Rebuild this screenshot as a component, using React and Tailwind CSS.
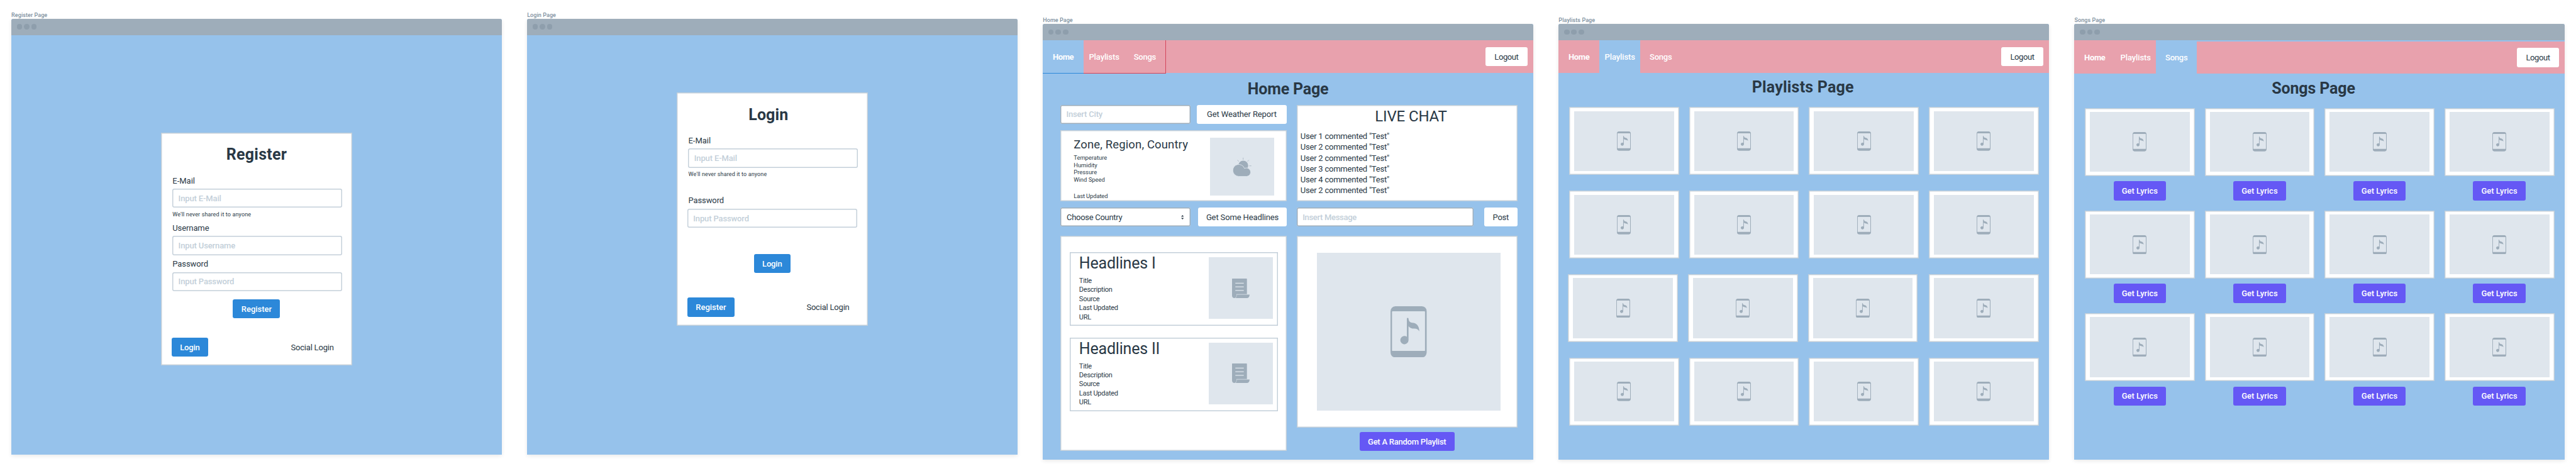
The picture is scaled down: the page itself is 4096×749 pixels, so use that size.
import React from "react";

function DeviceIcon({ className }) {
  return (
    <svg viewBox="130 14 239 337" preserveAspectRatio="none" className={className} fill="#9eadba">
      <path
        fillRule="evenodd"
        d="M162 14H337Q369 17 369 48V317Q367 349 337 351H162Q131 348 130 317V48Q132 17 162 14ZM144 47Q140 47 140 51V304Q140 308 144 308H354Q358 308 358 304V51Q358 47 354 47Z"
      />
      <path d="M238 95Q238 90 243.500 90Q249 90 249 96Q251 121 273 123Q319 126 320 179Q310 161 287 161Q262 161 249 145V238A27 27 0 1 1 238 215Z" />
    </svg>
  );
}

function CloudIcon() {
  return (
    <svg viewBox="222 52 132 130" className="mt-[2px] h-[31.300px] w-[31.800px]">
      <g stroke="#9eadba" strokeWidth="3" strokeLinecap="round">
        <path d="M295.500 57V67M259 72L265.500 79M332 72L325.500 79M338 109H348" />
      </g>
      <circle cx="296" cy="107" r="32.500" fill="#9eadba" />
      <path
        d="M266 178.500A39.500 39.500 0 1 1 304 126A28 28 0 1 1 321 178.500Z"
        fill="#9eadba"
        stroke="#dfe6ed"
        strokeWidth="3.500"
      />
    </svg>
  );
}

function ScrollIcon() {
  return (
    <svg viewBox="69 98 117 130" preserveAspectRatio="none" className="h-[31px] w-[28px]">
      <path
        d="M72 98H165Q168 98 168 101V202H98V213Q97 226 84 228Q70 227 69 212V101Q69 98 72 98Z"
        fill="#9eadba"
      />
      <path d="M100 205H186Q184 226 170 228H93Q100 222 100 212Z" fill="#9eadba" />
      <path d="M91 129H147M91 153H147M91 177H147" stroke="#dfe6ed" strokeWidth="5" />
    </svg>
  );
}

function Frame({ label, offset, children }) {
  return (
    <section className={`w-[780px] shrink-0 ${offset}`}>
      <p className="h-[12px] pl-[0.200px] text-[9px] leading-[13.400px] font-medium tracking-[0.070px] whitespace-nowrap text-[#7d8f9e]">
        {label}
      </p>
      <div className="flex h-[693px] flex-col overflow-hidden rounded-t-[3px] bg-[#96c2eb] shadow-[0_2px_6px_rgba(0,0,0,0.090)]">
        <div className="flex h-[26px] shrink-0 items-center gap-[2.900px] bg-[#9eadba] pl-[8.700px]">
          <i className="size-[8.660px] rounded-full bg-[#8e9eac]" />
          <i className="size-[8.660px] rounded-full bg-[#8e9eac]" />
          <i className="size-[8.660px] rounded-full bg-[#8e9eac]" />
        </div>
        {children}
      </div>
    </section>
  );
}

function Field({ text, className }) {
  return (
    <div
      className={`flex h-[30.200px] items-center rounded-[3px] bg-white pt-px pl-[9.300px] font-medium whitespace-nowrap text-[#c3cfd9] ${className}`}
    >
      {text}
    </div>
  );
}

const formField = "w-[270px] shadow-[inset_0_0_0_1.440px_#c3cfd9] tracking-[-0.130px]";
const homeField = "shadow-[inset_0_0_0_1.440px_#9eadba]";

function BlueButton({ text, className }) {
  return (
    <button
      className={`flex h-[30.300px] items-center justify-center rounded-[3px] bg-[#2c88d9] pt-px font-medium text-white ${className}`}
    >
      {text}
    </button>
  );
}

function PurpleButton({ text, className }) {
  return (
    <button
      className={`flex h-[30.400px] items-center justify-center rounded-[3px] bg-[#6558f5] pt-px font-medium whitespace-nowrap text-white ${className}`}
    >
      {text}
    </button>
  );
}

function WhiteButton({ text, className }) {
  return (
    <button
      className={`flex h-[30.200px] shrink-0 items-center justify-center rounded-[3px] bg-white pt-px whitespace-nowrap ${className}`}
    >
      {text}
    </button>
  );
}

function RegisterPage() {
  return (
    <Frame label="Register Page" offset="mt-[17.600px]">
      <div className="mt-[155.100px] ml-[238.100px] flex h-[370.700px] w-[304px] flex-col bg-white px-[18.300px] pt-[17.100px] shadow-[inset_0_0_0_1.440px_#c3cfd9]">
        <h1 className="h-[36px] text-center text-[25px] leading-[36.500px] font-bold tracking-[0.240px]">Register</h1>
        <label className="mt-[14.800px] h-[16px] leading-[17.200px]">E-Mail</label>
        <Field text="Input E-Mail" className={`mt-[5.400px] ${formField}`} />
        <p className="mt-[4.800px] h-[12px] text-[9px] leading-[12.500px] tracking-[0.130px]">We'll never shared it to anyone</p>
        <label className="mt-[6.600px] h-[16px] leading-[17.200px] tracking-[-0.100px]">Username</label>
        <Field text="Input Username" className={`mt-[5.900px] ${formField}`} />
        <label className="mt-[5.700px] h-[16px] leading-[17.200px] tracking-[-0.100px]">Password</label>
        <Field text="Input Password" className={`mt-[5.400px] ${formField}`} />
        <BlueButton text="Register" className="mt-[13.300px] w-[75px] self-center" />
        <div className="mt-[30.400px] -ml-[1.500px] flex items-center justify-between pr-[11px]">
          <BlueButton text="Login" className="w-[58.300px] tracking-[-0.200px]" />
          <span className="pt-px tracking-[-0.200px]">Social Login</span>
        </div>
      </div>
    </Frame>
  );
}

function LoginPage() {
  return (
    <Frame label="Login Page" offset="mt-[17.600px]">
      <div className="mt-[91.500px] ml-[237.800px] flex h-[370.700px] w-[304px] flex-col bg-white px-[18.700px] pt-[17.900px] shadow-[inset_0_0_0_1.440px_#c3cfd9]">
        <h1 className="h-[36px] pr-[12px] text-center text-[25px] leading-[36.500px] font-bold tracking-[0.100px]">Login</h1>
        <label className="mt-[14.100px] h-[16px] leading-[17.200px]">E-Mail</label>
        <Field text="Input E-Mail" className={`mt-[5.400px] ${formField}`} />
        <p className="mt-[4.800px] h-[12px] text-[9px] leading-[12.500px] tracking-[0.130px]">We'll never shared it to anyone</p>
        <label className="mt-[26.600px] h-[16px] leading-[17.200px] tracking-[-0.100px]">Password</label>
        <Field text="Input Password" className={`mt-[5.900px] -ml-[1.500px] ${formField}`} />
        <BlueButton text="Login" className="mt-[41.900px] w-[58.300px] self-center tracking-[-0.200px]" />
        <div className="mt-[39.100px] -ml-[1.500px] flex items-center justify-between pr-[10.500px]">
          <BlueButton text="Register" className="w-[75px]" />
          <span className="pt-px tracking-[-0.200px]">Social Login</span>
        </div>
      </div>
    </Frame>
  );
}

const tabs = [
  ["Home", "font-bold tracking-[-0.350px]"],
  ["Playlists", "font-medium tracking-[-0.100px]"],
  ["Songs", "font-medium tracking-[-0.240px]"],
];

function Nav({ active, tabsClass, barClass }) {
  return (
    <nav className={`flex shrink-0 ${barClass}`}>
      <div className={`flex text-white ${tabsClass}`}>
        {tabs.map(([name, cls]) => (
          <div
            key={name}
            className={`flex w-[65px] items-center justify-center pt-px ${cls} ${name === active ? "bg-[#96c2eb]" : "bg-[#e8a1ad]"}`}
          >
            {name}
          </div>
        ))}
      </div>
      <div className="flex flex-1 items-center justify-end bg-[#e8a1ad] pr-[9.400px]">
        <WhiteButton text="Logout" className="w-[66.600px] tracking-[-0.400px]" />
      </div>
    </nav>
  );
}

function HomeNav() {
  return (
    <nav className="flex h-[52px] shrink-0 bg-[#e8a1ad]">
      <div className="-mb-px flex h-[53px] text-white">
        <div className="flex w-[65px] items-center justify-center border-b border-[#2c88d9] bg-[#96c2eb] pt-px font-bold tracking-[-0.350px]">
          Home
        </div>
        <div className="flex w-[65px] items-center justify-center border-b border-[#d3455b] bg-[#e8a1ad] pt-px font-medium tracking-[-0.100px]">
          Playlists
        </div>
        <div className="flex w-[65.500px] items-center justify-center border-r border-b border-[#d3455b] bg-[#e8a1ad] pt-px font-medium tracking-[-0.240px]">
          Songs
        </div>
      </div>
      <div className="flex flex-1 items-center justify-end pr-[9.400px]">
        <WhiteButton text="Logout" className="w-[66.600px] tracking-[-0.400px]" />
      </div>
    </nav>
  );
}

const card = "bg-white shadow-[inset_0_0_0_1.440px_#c3cfd9]";

function Headline({ title, className }) {
  return (
    <article className={`flex h-[116.900px] w-[330.700px] justify-between pt-[7.900px] pr-[8px] pl-[15px] ${card} ${className}`}>
      <div className="text-[11px] leading-[14.400px] tracking-[-0.260px]">
        <h2 className="-mt-[5.700px] mb-[4.600px] h-[32px] text-[25px] leading-[32px] tracking-[-0.200px] whitespace-nowrap">{title}</h2>
        <p>Title</p>
        <p>Description</p>
        <p>Source</p>
        <p>Last Updated</p>
        <p>URL</p>
      </div>
      <div className="flex h-[98.300px] w-[101.100px] items-center justify-center bg-[#dfe6ed]">
        <ScrollIcon />
      </div>
    </article>
  );
}

const speakers = [1, 2, 2, 3, 4, 2];

function HomePage() {
  return (
    <Frame label="Home Page" offset="mt-[26px]">
      <HomeNav />
      <h1 className="mt-[7.200px] h-[36px] text-center text-[25px] leading-[37.400px] font-bold tracking-[-0.200px]">Home Page</h1>
      <div className="flex gap-[15.900px] pt-[7.400px] pl-[28.200px]">
        <div className="flex w-[359.700px] flex-col">
          <div className="flex justify-between">
            <Field text="Insert City" className={`w-[206.400px] tracking-[-0.190px] ${homeField}`} />
            <WhiteButton text="Get Weather Report" className="w-[143.100px] tracking-[-0.130px]" />
          </div>
          <div className={`mt-[10px] flex h-[113.400px] justify-between pt-[12.200px] pr-[19.600px] pl-[21px] ${card}`}>
            <div className="text-[9.400px] leading-[11.500px] whitespace-nowrap">
              <h2 className="-mt-[1.400px] mb-[3.600px] h-[24px] text-[18.500px] leading-[24px] tracking-[0.130px]">Zone, Region, Country</h2>
              <p>Temperature</p>
              <p>Humidity</p>
              <p>Pressure</p>
              <p>Wind Speed</p>
              <p className="mt-[14.400px] tracking-[-0.110px]">Last Updated</p>
            </div>
            <div className="flex h-[91.900px] w-[102.500px] items-center justify-center bg-[#dfe6ed]">
              <CloudIcon />
            </div>
          </div>
          <div className="mt-[10px] flex justify-between">
            <div className={`flex h-[30.200px] w-[206.400px] items-center justify-between rounded-[3px] bg-white pt-px pr-[10.200px] pl-[9.800px] tracking-[-0.300px] ${homeField}`}>
              Choose Country
              <svg viewBox="0 0 16 27" preserveAspectRatio="none" className="h-[7px] w-[4.600px]" fill="#293845">
                <path d="M8 0L16 10H0ZM8 27L16 17H0Z" />
              </svg>
            </div>
            <WhiteButton text="Get Some Headlines" className="w-[140.900px] tracking-[-0.130px]" />
          </div>
          <div className={`mt-[14.900px] h-[342px] pt-[26px] pl-[14.600px] ${card}`}>
            <Headline title="Headlines I" className="" />
            <Headline title="Headlines II" className="mt-[18.700px]" />
          </div>
        </div>
        <div className="flex w-[350.800px] flex-col">
          <div className={`h-[153.600px] pt-[2.500px] ${card}`}>
            <h2 className="h-[32px] pl-[12.600px] text-center text-[24px] leading-[32px] tracking-[-0.140px]">LIVE CHAT</h2>
            <ul className="mt-[7px] pl-[6px] leading-[17.240px] tracking-[-0.230px]">
              {speakers.map((n, i) => (
                <li key={i}>{`User ${n} commented "Test"`}</li>
              ))}
            </ul>
          </div>
          <div className="mt-[10px] flex justify-between">
            <Field text="Insert Message" className={`w-[281.500px] tracking-[-0.310px] ${homeField}`} />
            <WhiteButton text="Post" className="w-[52.800px] tracking-[-0.300px]" />
          </div>
          <div className={`mt-[14.900px] h-[304.300px] pt-[26.700px] pl-[32.600px] ${card}`}>
            <div className="flex h-[251px] w-[291.400px] items-center justify-center bg-[#dfe6ed]">
              <DeviceIcon className="h-[81.500px] w-[57.500px]" />
            </div>
          </div>
          <PurpleButton text="Get A Random Playlist" className="mt-[7.400px] w-[151.400px] self-center tracking-[-0.240px]" />
        </div>
      </div>
    </Frame>
  );
}

function Cover({ className }) {
  return (
    <div className={`h-[108px] w-[174.800px] px-[8px] pt-[6.300px] ${card} ${className}`}>
      <div className="flex h-[95.200px] items-center justify-center bg-[#dfe6ed]">
        <DeviceIcon className="h-[30.700px] w-[22px]" />
      </div>
    </div>
  );
}

function PlaylistsPage() {
  return (
    <Frame label="Playlists Page" offset="mt-[26px]">
      <Nav active="Playlists" barClass="h-[52px]" tabsClass="" />
      <h1 className="mt-[5.200px] h-[36px] pr-[3px] text-center text-[25px] leading-[36.800px] font-bold tracking-[0.200px]">
        Playlists Page
      </h1>
      <div className="grid grid-cols-[repeat(4,174.800px)] gap-x-[15.800px] gap-y-[24.800px] pt-[13.300px] pl-[16.800px]">
        {Array.from({ length: 16 }, (_, i) => (
          <Cover key={i} className={i >= 8 && i < 11 ? "-ml-[1.500px]" : ""} />
        ))}
      </div>
    </Frame>
  );
}

function SongsPage() {
  return (
    <Frame label="Songs Page" offset="mt-[26px]">
      <Nav
        active="Songs"
        barClass="mt-[1.500px] h-[51.900px]"
        tabsClass="-mt-[1.500px] pt-[1.500px] bg-[linear-gradient(90deg,#e8a1ad_130px,#96c2eb_130px)]"
      />
      <h1 className="mt-[5.400px] h-[36px] pr-[19.500px] text-center text-[25px] leading-[36.500px] font-bold tracking-[-0.140px]">
        Songs Page
      </h1>
      <div className="grid grid-cols-[repeat(4,174.800px)] gap-x-[15.800px] gap-y-[16.200px] pt-[13.100px] pl-[16.700px]">
        {Array.from({ length: 12 }, (_, i) => (
          <div key={i} className="flex flex-col items-center">
            <Cover className="" />
            <PurpleButton text="Get Lyrics" className="mt-[8.500px] w-[83.600px]" />
          </div>
        ))}
      </div>
    </Frame>
  );
}

export default function App() {
  return (
    <main className="flex h-[749px] w-[4096px] items-start gap-[40.100px] overflow-hidden bg-white pl-[17.900px] font-['Roboto','Liberation_Sans',sans-serif] text-[13px] leading-[16px] text-[#293845]">
      <RegisterPage />
      <LoginPage />
      <HomePage />
      <PlaylistsPage />
      <SongsPage />
    </main>
  );
}
